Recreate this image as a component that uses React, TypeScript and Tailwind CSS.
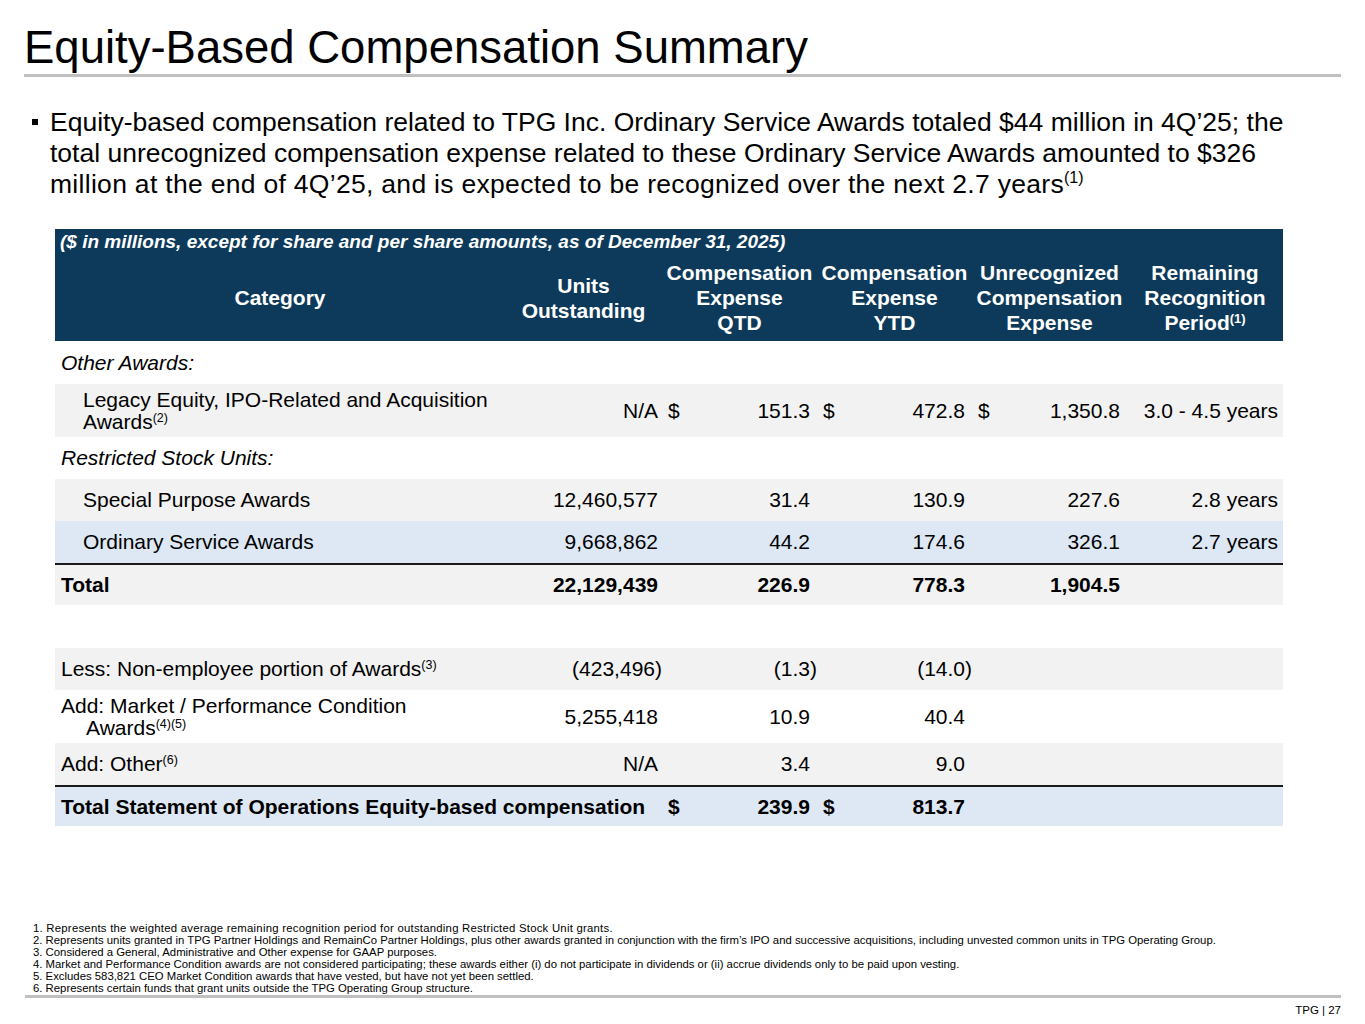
import type { ReactNode } from 'react';

type Row = {
  label: ReactNode;
  indent?: 'none' | 'sub' | 'hang';
  italic?: boolean;
  bold?: boolean;
  bg: string;
  h: string;
  topRule?: boolean;
  wide?: boolean; // label spans the units column too
  units?: string;
  qtd?: string;
  ytd?: string;
  unrec?: string;
  period?: string;
  dollar?: boolean;
};

const Sup = ({ children }: { children: ReactNode }) => (
  <sup className="text-[12.5px] top-[-0.55em]">{children}</sup>
);

const rows: Row[] = [
  { label: 'Other Awards:', italic: true, bg: 'bg-white', h: 'h-[43px]' },
  {
    label: (
      <>
        Legacy Equity, IPO-Related and Acquisition
        <br />
        Awards<Sup>(2)</Sup>
      </>
    ),
    indent: 'sub',
    bg: 'bg-[#f2f2f2]',
    h: 'h-[53px]',
    units: 'N/A',
    qtd: '151.3',
    ytd: '472.8',
    unrec: '1,350.8',
    period: '3.0 - 4.5 years',
    dollar: true,
  },
  { label: 'Restricted Stock Units:', italic: true, bg: 'bg-white', h: 'h-[42px]' },
  {
    label: 'Special Purpose Awards',
    indent: 'sub',
    bg: 'bg-[#f2f2f2]',
    h: 'h-[42px]',
    units: '12,460,577',
    qtd: '31.4',
    ytd: '130.9',
    unrec: '227.6',
    period: '2.8 years',
  },
  {
    label: 'Ordinary Service Awards',
    indent: 'sub',
    bg: 'bg-[#dde8f4]',
    h: 'h-[42px]',
    units: '9,668,862',
    qtd: '44.2',
    ytd: '174.6',
    unrec: '326.1',
    period: '2.7 years',
  },
  {
    label: 'Total',
    bold: true,
    topRule: true,
    bg: 'bg-[#f2f2f2]',
    h: 'h-[42px]',
    units: '22,129,439',
    qtd: '226.9',
    ytd: '778.3',
    unrec: '1,904.5',
  },
  { label: '', bg: 'bg-white', h: 'h-[43px]' },
  {
    label: (
      <>
        Less: Non-employee portion of Awards<Sup>(3)</Sup>
      </>
    ),
    bg: 'bg-[#f2f2f2]',
    h: 'h-[42px]',
    units: '(423,496)',
    qtd: '(1.3)',
    ytd: '(14.0)',
  },
  {
    label: (
      <>
        Add: Market / Performance Condition
        <br />
        <span className="pl-[25px]">
          Awards<Sup>(4)(5)</Sup>
        </span>
      </>
    ),
    bg: 'bg-white',
    h: 'h-[53px]',
    units: '5,255,418',
    qtd: '10.9',
    ytd: '40.4',
  },
  {
    label: (
      <>
        Add: Other<Sup>(6)</Sup>
      </>
    ),
    bg: 'bg-[#f2f2f2]',
    h: 'h-[42px]',
    units: 'N/A',
    qtd: '3.4',
    ytd: '9.0',
  },
  {
    label: 'Total Statement of Operations Equity-based compensation',
    bold: true,
    wide: true,
    topRule: true,
    bg: 'bg-[#dde8f4]',
    h: 'h-[41px]',
    qtd: '239.9',
    ytd: '813.7',
    dollar: true,
  },
];

const footnotes = [
  '1. Represents the weighted average remaining recognition period for outstanding Restricted Stock Unit grants.',
  '2. Represents units granted in TPG Partner Holdings and RemainCo Partner Holdings, plus other awards granted in conjunction with the firm’s IPO and successive acquisitions, including unvested common units in TPG Operating Group.',
  '3. Considered a General, Administrative and Other expense for GAAP purposes.',
  '4. Market and Performance Condition awards are not considered participating; these awards either (i) do not participate in dividends or (ii) accrue dividends only to be paid upon vesting.',
  '5. Excludes 583,821 CEO Market Condition awards that have vested, but have not yet been settled.',
  '6. Represents certain funds that grant units outside the TPG Operating Group structure.',
];

const neg = (v?: string) => !!v && v.startsWith('(');

function MoneyCell({ v, dollar }: { v?: string; dollar?: boolean }) {
  return (
    <div className="flex items-center justify-between pl-[6px] pr-[7px]">
      <span>{dollar ? '$' : ''}</span>
      <span className={neg(v) ? '-mr-[7px]' : ''}>{v ?? ''}</span>
    </div>
  );
}

function TableRow({ r }: { r: Row }) {
  const pad = r.indent === 'sub' ? 'pl-[28px]' : 'pl-[6px]';
  return (
    <div
      className={`grid grid-cols-[450px_157px_155px_155px_155px_156px] items-center ${r.h} ${r.bg} ${
        r.topRule ? 'border-t-2 border-[#1a1a1a]' : ''
      } ${r.bold ? 'font-bold' : ''}`}
    >
      <div className={`${pad} ${r.italic ? 'italic' : ''} ${r.wide ? 'col-span-2' : ''} leading-[22px]`}>
        {r.label}
      </div>
      {!r.wide && (
        <div className="pr-[4px] text-right">
          <span className={neg(r.units) ? '-mr-[4px]' : ''}>{r.units ?? ''}</span>
        </div>
      )}
      <MoneyCell v={r.qtd} dollar={r.dollar} />
      <MoneyCell v={r.ytd} dollar={r.dollar} />
      <MoneyCell v={r.unrec} dollar={r.dollar && !!r.unrec} />
      <div className="pr-[5px] text-right">{r.period ?? ''}</div>
    </div>
  );
}

export default function App() {
  return (
    <div className="flex h-[1024px] w-[1365px] flex-col bg-white font-['Liberation_Sans',Arial,sans-serif] text-black">
      {/* title */}
      <div className="px-[24px] pt-[22px]">
        <h1 className="text-[45.5px] leading-[52px]">Equity-Based Compensation Summary</h1>
        <div className="h-[3px] w-[1317px] bg-[#c0c0c0]" />
      </div>

      {/* bullet */}
      <div className="mt-[30px] flex pl-[32px] text-[26.5px] leading-[31px]">
        <span className="w-[18px] shrink-0 pt-[12px]">
          <span className="block h-[6px] w-[6px] bg-black" />
        </span>
        <p className="w-[1300px]">
          Equity-based compensation related to TPG Inc. Ordinary Service Awards totaled $44 million in 4Q’25; the
          <br />
          total unrecognized compensation expense related to these Ordinary Service Awards amounted to $326
          <br />
          <span className="tracking-[0.3px]">
            million at the end of 4Q’25, and is expected to be recognized over the next 2.7 years
          </span>
          <sup className="text-[16px] top-[-0.6em]">(1)</sup>
        </p>
      </div>

      {/* table */}
      <div className="ml-[55px] mt-[29px] w-[1228px] text-[21px]">
        <div className="h-[112px] bg-[#0d3a5a] font-bold text-white">
          <div className="pl-[5px] pt-[1px] text-[19px] italic leading-[24px]">
            ($ in millions, except for share and per share amounts, as of December 31, 2025)
          </div>
          <div className="mt-[6px] grid h-[75px] grid-cols-[450px_157px_155px_155px_155px_156px] items-center text-center leading-[25px]">
            <div>Category</div>
            <div>
              Units
              <br />
              Outstanding
            </div>
            <div>
              Compensation
              <br />
              Expense
              <br />
              QTD
            </div>
            <div>
              Compensation
              <br />
              Expense
              <br />
              YTD
            </div>
            <div>
              Unrecognized
              <br />
              Compensation
              <br />
              Expense
            </div>
            <div>
              Remaining
              <br />
              Recognition
              <br />
              Period<sup className="text-[13px] top-[-0.55em]">(1)</sup>
            </div>
          </div>
        </div>
        {rows.map((r, i) => (
          <TableRow key={i} r={r} />
        ))}
      </div>

      {/* footnotes */}
      <div className="mt-[96px] pl-[33px] text-[11.35px] leading-[12px]">
        {footnotes.map((f, i) => (
          <div key={f} className={i === 0 ? 'tracking-[0.24px]' : ''}>
            {f}
          </div>
        ))}
      </div>
      <div className="ml-[25px] mt-[1px] h-[3px] w-[1316px] bg-[#c0c0c0]" />
      <div className="w-[1341px] pt-[5px] text-right text-[11.5px] leading-[14px]">TPG | 27</div>
    </div>
  );
}
